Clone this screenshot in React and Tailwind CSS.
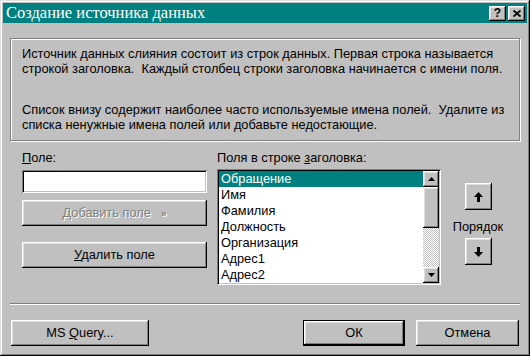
import React from 'react';

const raised = 'shadow-[inset_-1px_-1px_0_#000,inset_1px_1px_0_#fff,inset_-2px_-2px_0_#808080,inset_2px_2px_0_#dfdfdf]';
const sunken = 'shadow-[inset_1px_1px_0_#808080,inset_-1px_-1px_0_#fff,inset_2px_2px_0_#000,inset_-2px_-2px_0_#c0c0c0]';

function Button({ children, className = '', disabled = false }) {
  return (
    <div className={`flex items-center justify-center bg-[#c0c0c0] ${raised} ${disabled ? 'text-[#808080] [text-shadow:1px_1px_0_#fff]' : 'text-black'} ${className}`}>
      {children}
    </div>
  );
}

function Arrow({ dir }) {
  return (
    <svg width="7" height="4" viewBox="0 0 7 4">
      {dir === 'up' ? <path d="M3.5 0 L7 4 L0 4 Z" fill="#000" /> : <path d="M0 0 L7 0 L3.5 4 Z" fill="#000" />}
    </svg>
  );
}

function BigArrow({ dir }) {
  return (
    <svg width="9" height="10" viewBox="0 0 9 10" className={dir === 'down' ? 'rotate-180' : ''}>
      <path d="M4.5 0 L9 5 L6 5 L6 10 L3 10 L3 5 L0 5 Z" fill="#000" />
    </svg>
  );
}

const fields = ['Обращение', 'Имя', 'Фамилия', 'Должность', 'Организация', 'Адрес1', 'Адрес2'];

export default function App() {
  return (
    <div
      className="w-[530px] h-[356px] bg-[#c0c0c0] p-[3px] flex flex-col shadow-[inset_-1px_-1px_0_#000,inset_1px_1px_0_#dfdfdf,inset_-2px_-2px_0_#808080,inset_2px_2px_0_#fff] text-[12.8px] text-black"
      style={{ fontFamily: '"Liberation Sans", Arial, sans-serif' }}
    >
      {/* title bar */}
      <div className="h-[20px] bg-[#008080] flex items-center justify-between pl-[3px] pr-[2px] shrink-0">
        <span className="text-white text-[16.5px] leading-none" style={{ fontFamily: '"Liberation Serif", "Times New Roman", serif' }}>
          Создание источника данных
        </span>
        <div className="flex gap-[2px]">
          <Button className="w-[17px] h-[15px] font-bold text-[12px] leading-none">?</Button>
          <Button className="w-[17px] h-[15px]">
            <svg width="8" height="7" viewBox="0 0 8 7">
              <path d="M0.5 0.5 L7.5 6.5 M7.5 0.5 L0.5 6.5" stroke="#000" strokeWidth="1.8" />
            </svg>
          </Button>
        </div>
      </div>

      <div className="flex flex-col px-[7px] pt-[15px]">
        {/* info group */}
        <div className="h-[103px] border border-[#808080] shadow-[1px_1px_0_#fff,inset_1px_1px_0_#fff] pl-[11px] pt-[7px] leading-[15px]">
          <div className="whitespace-pre">Источник данных слияния состоит из строк данных. Первая строка называется</div>
          <div className="whitespace-pre">строкой заголовка.  Каждый столбец строки заголовка начинается с имени поля.</div>
          <div className="whitespace-pre mt-[26px]">Список внизу содержит наиболее часто используемые имена полей.  Удалите из</div>
          <div className="whitespace-pre">списка ненужные имена полей или добавьте недостающие.</div>
        </div>

        {/* middle */}
        <div className="flex pl-[12px] mt-[9px]">
          <div className="w-[185px] flex flex-col">
            <div className="leading-[15px] h-[19px]"><span className="underline">П</span>оле:</div>
            <div className={`h-[23px] bg-white mt-[1px] ${sunken}`} />
            <Button disabled className="h-[26px] mt-[7px] gap-[10px]">
              <span>Добавить поле</span>
              <span className="text-[10px] font-bold">»</span>
            </Button>
            <Button className="h-[26px] mt-[16px]">
              <span><span className="underline">У</span>далить поле</span>
            </Button>
          </div>

          <div className="ml-[10px] w-[224px] flex flex-col">
            <div className="leading-[15px] h-[19px]">Поля в строке <span className="underline">з</span>аголовка:</div>
            <div className={`h-[116px] bg-white p-[2px] flex ${sunken}`}>
              <div className="flex-1 flex flex-col">
                {fields.map((f, i) => (
                  <div key={f} className={`h-[16px] leading-[16px] pl-[2px] ${i === 0 ? 'bg-[#008080] text-white' : ''}`}>{f}</div>
                ))}
              </div>
              <div className="w-[16px] flex flex-col">
                <Button className="h-[16px] shrink-0"><Arrow dir="up" /></Button>
                <Button className="h-[41px] shrink-0" />
                <div className="flex-1 bg-[repeating-conic-gradient(#c0c0c0_0%_25%,#fff_0%_50%)] bg-[length:2px_2px]" />
                <Button className="h-[16px] shrink-0"><Arrow dir="down" /></Button>
              </div>
            </div>
          </div>

          <div className="ml-[12px] w-[50px] flex flex-col items-center pt-[33px]">
            <Button className="w-[27px] h-[27px]"><BigArrow dir="up" /></Button>
            <div className="leading-[15px] mt-[9px] mb-[4px]">Порядок</div>
            <Button className="w-[27px] h-[27px]"><BigArrow dir="down" /></Button>
          </div>
        </div>

        {/* separator */}
        <div className="mt-[18px] h-[2px] border-t border-[#808080] border-b border-b-white" />

        {/* bottom buttons */}
        <div className="flex mt-[15px] pl-[1px] pr-[1px]">
          <Button className="w-[138px] h-[26px]">
            <span>MS <span className="underline">Q</span>uery...</span>
          </Button>
          <div className="flex-1" />
          <div className="border border-black">
            <Button className="w-[100px] h-[24px]">ОК</Button>
          </div>
          <Button className="w-[103px] h-[26px] ml-[11px]">Отмена</Button>
        </div>
      </div>
    </div>
  );
}
